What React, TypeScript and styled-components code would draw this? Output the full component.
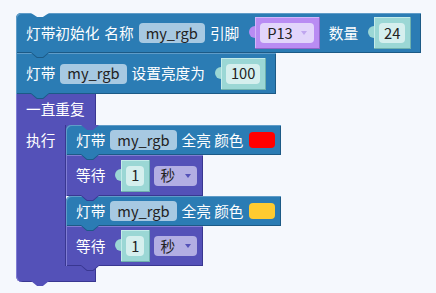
import React from "react";
import styled, { createGlobalStyle } from "styled-components";

type Tone = { fill: string; dark: string; light: string };

const BLUE: Tone = { fill: "#2b7cb4", dark: "#1c5a86", light: "#5f9cc8" };
const PURPLE: Tone = { fill: "#5451b8", dark: "#393791", light: "#807dd3" };
const PIN: Tone = { fill: "#b98cf3", dark: "#8f66c9", light: "#d3b6fa" };
const NUM: Tone = { fill: "#9bd7d5", dark: "#6fb1ae", light: "#c3ebe9" };

const PAGE = "#f5f8fd";

const GlobalStyle = createGlobalStyle`
  html, body {
    margin: 0;
    background: ${PAGE};
  }
  body {
    font-family: "Noto Sans CJK SC", "Noto Sans", sans-serif;
  }
`;

const Canvas = styled.div`
  width: 436px;
  height: 293px;
  box-sizing: border-box;
  padding: 13px 0 0 16px;
  overflow: hidden;
`;

const Stack = styled.div`
  display: flex;
  flex-direction: column;
  align-items: flex-start;
`;

// a statement block; its next-connection tab hangs off the bottom
const Block = styled.div<{ $tone: Tone; $h: number; $round?: boolean }>`
  position: relative;
  display: flex;
  align-items: center;
  gap: 5px;
  box-sizing: border-box;
  height: ${(p) => p.$h}px;
  padding: 0 6px 0 10px;
  background: ${(p) => p.$tone.fill};
  border-top-left-radius: ${(p) => (p.$round ? 5 : 0)}px;
  box-shadow: inset 1px 1px 0 ${(p) => p.$tone.light},
    inset -1px -1px 0 ${(p) => p.$tone.dark};
  color: #fff;
  font-size: 11pt;
  line-height: 1;
  white-space: nowrap;

  &::before,
  &::after {
    content: "";
    position: absolute;
    z-index: 2;
    clip-path: polygon(0 0, 100% 0, 66% 100%, 34% 100%);
  }
  &::before {
    top: calc(100% - 1px);
    left: 14px;
    width: 20px;
    height: 6px;
    background: ${(p) => p.$tone.dark};
  }
  &::after {
    top: calc(100% - 1px);
    left: 15px;
    width: 18px;
    height: 5px;
    background: ${(p) => p.$tone.fill};
  }
`;

const NotchCut = styled.span`
  position: absolute;
  top: 0;
  left: 15px;
  width: 18px;
  height: 4px;
  background: ${PAGE};
  clip-path: polygon(0 0, 100% 0, 66% 100%, 34% 100%);
`;

const Label = styled.span`
  display: inline-block;
`;

// value input block with its puzzle tab on the left
const Input = styled.span<{ $tone: Tone }>`
  position: relative;
  display: inline-flex;
  align-items: center;
  box-sizing: border-box;
  height: 32px;
  padding: 0 6px 0 5px;
  margin: 0 4px 0 11px;
  background: ${(p) => p.$tone.fill};
  box-shadow: inset -1px -1px 0 ${(p) => p.$tone.dark},
    inset 1px 1px 0 ${(p) => p.$tone.light};

  &::before {
    content: "";
    position: absolute;
    right: 100%;
    top: 9px;
    width: 6px;
    height: 12px;
    border-radius: 6px 0 0 6px;
    background: ${(p) => p.$tone.fill};
  }
`;

const Pill = styled.span<{ $bg: string; $pad?: number; $gap?: number }>`
  display: inline-flex;
  align-items: center;
  gap: ${(p) => p.$gap ?? 8}px;
  box-sizing: border-box;
  height: 20px;
  padding: 0 ${(p) => p.$pad ?? 5}px;
  border-radius: 4px;
  background: ${(p) => p.$bg};
  color: #222;
  font-size: 11pt;
  line-height: 1;
`;

const Dropdown = styled(Pill)`
  ${Input} + & {
    margin-left: -5px;
  }
`;

const Arrow = styled.span<{ $c: string }>`
  width: 0;
  height: 0;
  border-left: 3px solid transparent;
  border-right: 3px solid transparent;
  border-top: 4px solid ${(p) => p.$c};
`;

const Swatch = styled.span<{ $c: string }>`
  width: 26px;
  height: 16px;
  border-radius: 4px;
  background: ${(p) => p.$c};
`;

const Loop = styled.div`
  display: flex;
  flex-direction: column;
  align-items: flex-start;
  color: #fff;
  font-size: 11pt;
  line-height: 1;
`;

const LoopHead = styled.div`
  position: relative;
  display: flex;
  align-items: center;
  box-sizing: border-box;
  width: 80px;
  height: 31px;
  padding-left: 10px;
  background: ${PURPLE.fill};
  box-shadow: inset 1px 0 0 ${PURPLE.light}, inset -1px 0 0 ${PURPLE.dark};

  &::after {
    content: "";
    position: absolute;
    z-index: 2;
    top: 100%;
    left: 65px;
    width: 18px;
    height: 5px;
    background: ${PURPLE.fill};
    clip-path: polygon(0 0, 100% 0, 66% 100%, 34% 100%);
  }
`;

const LoopBody = styled.div`
  display: flex;
  align-items: stretch;
`;

const LoopSide = styled.div`
  box-sizing: border-box;
  width: 50px;
  padding-left: 10px;
  background: ${PURPLE.fill};
  box-shadow: inset 1px 0 0 ${PURPLE.light}, inset -1px 0 0 ${PURPLE.dark};
  line-height: 30px;
`;

const Inner = styled.div`
  display: flex;
  flex-direction: column;
  align-items: flex-start;
  background: linear-gradient(${PURPLE.fill}, ${PURPLE.fill}) no-repeat 0 0 / 6px 6px;
`;

const LoopFoot = styled.div`
  position: relative;
  width: 80px;
  height: 16px;
  background: ${PURPLE.fill};
  border-bottom-left-radius: 6px;
  box-shadow: inset 1px 0 0 ${PURPLE.light}, inset -1px -1px 0 ${PURPLE.dark};

  &::after {
    content: "";
    position: absolute;
    top: calc(100% - 1px);
    left: 15px;
    width: 18px;
    height: 5px;
    background: ${PURPLE.fill};
    clip-path: polygon(0 0, 100% 0, 66% 100%, 34% 100%);
  }
`;

const FIELD = "#a7c9e2";
const NUM_IN = "#d5efee";
const PIN_IN = "#e2d5fb";
const UNIT = "#b2aee3";

const NumberInput = ({ value }: { value: string }) => (
  <Input $tone={NUM}>
    <Pill $bg={NUM_IN}>{value}</Pill>
  </Input>
);

const FillAll = ({ color }: { color: string }) => (
  <Block $tone={BLUE} $h={30} $round>
    <Label>灯带</Label>
    <Pill $bg={FIELD} $pad={7}>my_rgb</Pill>
    <Label>全亮 颜色</Label>
    <Swatch $c={color} />
  </Block>
);

const Wait = ({ h }: { h: number }) => (
  <Block $tone={PURPLE} $h={h}>
    <Label>等待</Label>
    <NumberInput value="1" />
    <Dropdown $bg={UNIT} $pad={6} $gap={10}>
      秒<Arrow $c={PURPLE.fill} />
    </Dropdown>
  </Block>
);

export default function App() {
  return (
    <>
      <GlobalStyle />
      <Canvas>
        <Stack>
          <Block $tone={BLUE} $h={40} $round>
            <NotchCut />
            <Label>灯带初始化</Label>
            <Label>名称</Label>
            <Pill $bg={FIELD} $pad={7}>my_rgb</Pill>
            <Label>引脚</Label>
            <Input $tone={PIN}>
              <Pill $bg={PIN_IN} $pad={7}>
                P13<Arrow $c="#c0a6ef" />
              </Pill>
            </Input>
            <Label>数量</Label>
            <NumberInput value="24" />
          </Block>
          <Block $tone={BLUE} $h={41}>
            <Label>灯带</Label>
            <Pill $bg={FIELD} $pad={7}>my_rgb</Pill>
            <Label>设置亮度为</Label>
            <NumberInput value="100" />
          </Block>
          <Loop>
            <LoopHead>一直重复</LoopHead>
            <LoopBody>
              <LoopSide>执行</LoopSide>
              <Inner>
                <FillAll color="#ff0000" />
                <Wait h={41} />
                <FillAll color="#ffcb30" />
                <Wait h={40} />
              </Inner>
            </LoopBody>
            <LoopFoot />
          </Loop>
        </Stack>
      </Canvas>
    </>
  );
}
